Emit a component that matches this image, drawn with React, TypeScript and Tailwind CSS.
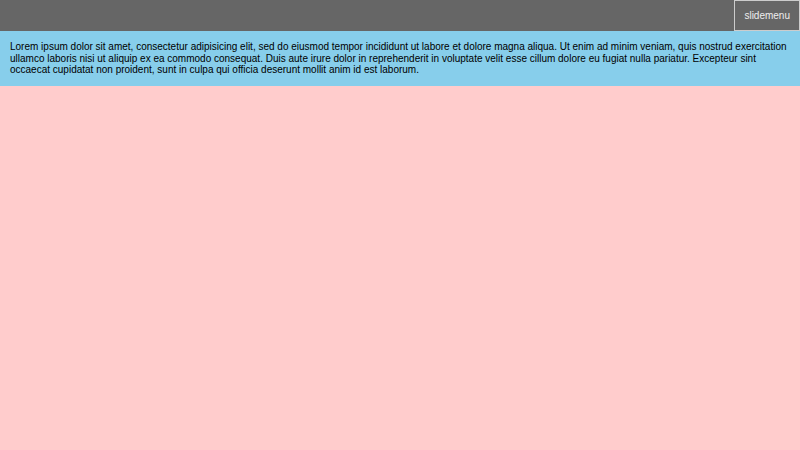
export default function App() {
  return (
    <div className="min-h-[450px] bg-[#ffcccc] font-['Liberation_Sans',Arial,sans-serif] text-[10px] leading-[1.15]">
      <header className="flex h-[31px] justify-end bg-[#666666]">
        <button className="flex h-[31px] items-center border border-[#cccccc] px-[9px] text-[#eeeeee]">slidemenu</button>
      </header>
      <div className="bg-[#87ceeb] p-[10px] text-black">
        Lorem ipsum dolor sit amet, consectetur adipisicing elit, sed do eiusmod tempor incididunt ut labore et dolore magna aliqua. Ut enim ad minim veniam, quis nostrud exercitation ullamco laboris nisi ut aliquip ex ea commodo consequat. Duis aute irure dolor in reprehenderit in voluptate velit esse cillum dolore eu fugiat nulla pariatur. Excepteur sint occaecat cupidatat non proident, sunt in culpa qui officia deserunt mollit anim id est laborum.
      </div>
    </div>
  );
}
